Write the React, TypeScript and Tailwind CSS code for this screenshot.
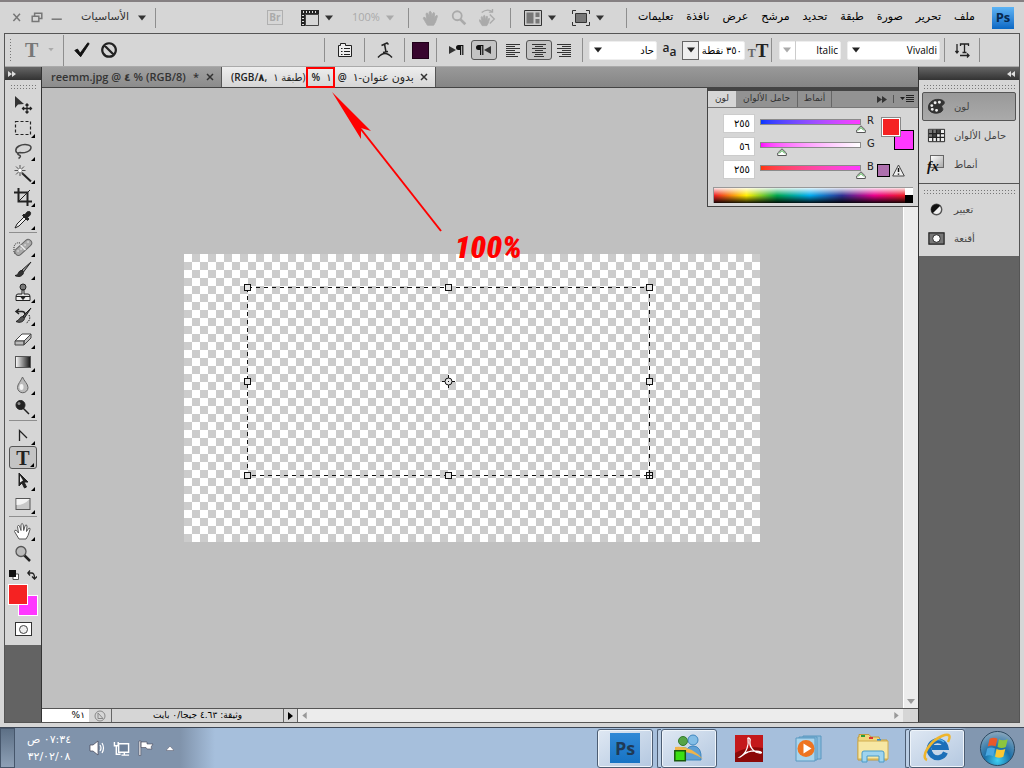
import { useState } from 'react';
import type { ReactNode } from 'react';
import clsx from 'clsx';

const MENUS = ['تعليمات', 'نافذة', 'عرض', 'مرشح', 'تحديد', 'طبقة', 'صورة', 'تحرير', 'ملف'];

type IconProps = { children: ReactNode; className?: string; size?: number };

function Icon({ children, className, size = 20 }: IconProps) {
  return (
    <svg viewBox="0 0 20 20" width={size} height={size} className={clsx('shrink-0', className)} fill="none" stroke="#222" aria-hidden="true">
      {children}
    </svg>
  );
}

function Caret({ className }: { className?: string }) {
  return (
    <svg viewBox="0 0 8 6" width="8" height="6" className={clsx('shrink-0', className)} fill="currentColor" aria-hidden="true">
      <path d="M0 .5h8L4 5.5z" />
    </svg>
  );
}

function Grip({ className }: { className?: string }) {
  return (
    <div
      className={clsx('bg-[radial-gradient(#777_40%,transparent_45%)] bg-[length:3px_3px]', className)}
    />
  );
}

function Rule({ className }: { className?: string }) {
  return <div className={clsx('w-px shrink-0 bg-[#8e8e8e]', className)} />;
}

// ---- toolbox ----

const handShape = 'M6 18 3 13 1.5 10.5Q1.5 8.500 3.500 9.500L5.500 12 4.500 5.500Q5 3.500 6.500 5L8 9.500V3.500Q9 1.500 10.200 3.500L10.700 9.500 12.200 4.500Q13.500 3 14 5L13.500 10.500 15.500 7.500Q17.500 6.500 17 8.500L15 14.500 13 18z';

const TOOLS: { name: string; icon: ReactNode; corner?: boolean; sep?: boolean }[] = [
  {
    name: 'Move',
    icon: (
      <>
        <path d="M2 1v12l3-3.500 6-.5z" fill="#333" stroke="none" />
        <path d="M14 9v9M9.500 13.500h9M12.500 10.500 14 9l1.500 1.500M12.500 16.500 14 18l1.500-1.500M11 12l-1.500 1.500L11 15M17 12l1.500 1.500L17 15" strokeWidth="1.300" />
      </>
    ),
  },
  { name: 'Marquee', corner: true, icon: <rect x="2.500" y="3.500" width="15" height="13" strokeDasharray="3 2" strokeWidth="1.200" /> },
  {
    name: 'Lasso',
    corner: true,
    icon: <path d="M6 12.500C2 12 1.500 7.500 6 5c5-2.500 12-1.500 12 1.500 0 4-7 6-11 5-2.500 0-3 2-1 2.500s2 2-.5 3.500" stroke="#444" strokeWidth="1.500" />,
  },
  {
    name: 'Magic wand',
    corner: true,
    icon: (
      <>
        <path d="m9 9 9 8.500" strokeWidth="2" />
        <path d="M7 1v11M1.500 6.500h11M3 2.500l8 8M11 2.500l-8 8" stroke="#555" />
        <circle cx="7" cy="6.500" r="1.800" fill="#fff" stroke="none" />
      </>
    ),
  },
  {
    name: 'Crop',
    corner: true,
    icon: (
      <>
        <path d="M5.500 1v13.500H19M1 5.500h13.500V19" strokeWidth="2" />
        <path d="M6 14 17 3" />
      </>
    ),
  },
  {
    name: 'Eyedropper',
    corner: true,
    icon: (
      <>
        <path d="m2 18 2-4 7-7 2 2-7 7z" fill="#eee" />
        <path d="m9.500 5.500 5 5 1.500-1.500-1.500-1.500C19 4.500 18 1 15.500 1.500 14 1.500 13 3 12 5l-1-1z" fill="#222" />
      </>
    ),
  },
  {
    name: 'Healing brush',
    corner: true,
    sep: true,
    icon: (
      <>
        <path d="M7 6q-5-1-6 4v6h5" strokeDasharray="1 1" />
        <rect x="0" y="7" width="20" height="7" rx="3.500" transform="rotate(-42 10 10)" fill="#aaa" stroke="#666" />
        <path d="m8 8.500 4 4M5 14h.1M8 12h.1M12 8h.1M15 5h.1" stroke="#eee" strokeWidth="1.500" strokeLinecap="round" />
      </>
    ),
  },
  {
    name: 'Brush',
    corner: true,
    icon: (
      <>
        <path d="m18 2-9 8 1.500 2z" fill="#999" />
        <path d="M9 10.500c-4-.5-3 5-7 5 3 2 8 1 8.500-3z" fill="#333" />
      </>
    ),
  },
  {
    name: 'Clone stamp',
    corner: true,
    icon: (
      <>
        <circle cx="10" cy="4" r="3" fill="#777" />
        <path d="M9 7v4H5q-2 0-2 2.500h14Q17 11 15 11h-4V7z" fill="#ddd" />
        <path d="M3 13.500h14v4H3z" fill="#eee" />
        <path d="M7.500 13.500h5L10 16.500z" fill="#222" />
      </>
    ),
  },
  {
    name: 'History brush',
    corner: true,
    icon: (
      <>
        <path d="m18 2-8 8 1.500 2zM10 10.500c-4 0-3 4-7 5 4 2 8 0 8.500-3z" fill="#555" />
        <path d="M3 5.500h6q3 0 3 3M6 3 3 5.500 6 8" strokeWidth="1.500" />
        <path d="M16 9c2 3 0 7-3 8" strokeDasharray="1.500 1" />
      </>
    ),
  },
  {
    name: 'Eraser',
    corner: true,
    icon: (
      <>
        <path d="m2 12 7-7h9l-7 7z" fill="#fff" stroke="#444" />
        <path d="M2 12h9v4H2zM11 12l7-7v4l-7 7z" fill="#bbb" stroke="#444" />
      </>
    ),
  },
  {
    name: 'Gradient',
    corner: true,
    icon: (
      <>
        <defs>
          <linearGradient id="toolGradient">
            <stop offset="0" stopColor="#fff" />
            <stop offset="1" stopColor="#111" />
          </linearGradient>
        </defs>
        <rect x="2.500" y="4.500" width="15" height="11" fill="url(#toolGradient)" stroke="#555" />
      </>
    ),
  },
  {
    name: 'Blur',
    corner: true,
    icon: (
      <>
        <path d="M9.500 2C8 6 4.500 9 4.500 12.500a5 5 0 0 0 10.500 0C15 9 11 6 9.500 2z" fill="#bbb" stroke="#666" />
        <ellipse cx="8.500" cy="12" rx="2" ry="3" fill="#f4f4f4" stroke="none" />
      </>
    ),
  },
  {
    name: 'Burn',
    corner: true,
    icon: (
      <>
        <path d="m10 10 6 6" strokeWidth="1.500" />
        <circle cx="7.500" cy="7" r="4.500" fill="#222" />
        <circle cx="6" cy="5.500" r="1.500" fill="#888" stroke="none" />
      </>
    ),
  },
  { name: 'Pen', corner: true, sep: true, icon: <path d="M6.500 16V5.500L14 13" strokeWidth="1.300" /> },
  { name: 'Type', corner: true, icon: null },
  {
    name: 'Path selection',
    corner: true,
    icon: (
      <>
        <path d="M6 2v13l3-3 2.500 5 2-1-2.500-5h4z" fill="#222" />
        <path d="M7 4.500v7l3-2z" fill="#eee" stroke="none" />
      </>
    ),
  },
  {
    name: 'Rectangle',
    corner: true,
    icon: (
      <>
        <rect x="3" y="4.500" width="14" height="11" fill="#c8c8c8" stroke="#555" />
        <path d="M3.500 11q8 0 13-6H3.500z" fill="#f4f4f4" stroke="none" />
      </>
    ),
  },
  { name: 'Hand', corner: true, sep: true, icon: <path d={handShape} fill="#fff" stroke="#555" /> },
  {
    name: 'Zoom',
    icon: (
      <>
        <path d="m11 11 6 6" strokeWidth="2.500" />
        <circle cx="8" cy="7.500" r="5" fill="#bbb" stroke="#555" strokeWidth="1.300" />
      </>
    ),
  },
];

function Toolbox() {
  const [active, setActive] = useState('Type');

  return (
    <aside className="flex w-[37px] shrink-0 flex-col border-r border-[#333] bg-[#636363]">
      <div className="flex h-[13px] items-center bg-linear-to-b from-[#666] to-[#333] pl-[3px] text-[#ddd]">
        <svg viewBox="0 0 8 6" width="8" height="6" fill="currentColor" aria-hidden="true">
          <path d="M0 0l4 3-4 3zM4 0l4 3-4 3z" />
        </svg>
      </div>
      <div className="flex flex-col items-center bg-[#d6d6d6]">
        <Grip className="my-1 h-[5px] w-[27px]" />
        {TOOLS.map((tool) => (
          <div key={tool.name} className={clsx('w-full px-1', tool.sep && 'pt-[4px]')}>
            {tool.sep && <div className="-mt-[3px] mb-[2px] h-px bg-[#8e8e8e]" />}
            <button
              aria-label={tool.name}
              onClick={() => setActive(tool.name)}
              className={clsx(
                'relative flex h-[23px] w-full items-center justify-center rounded-[3px]',
                active === tool.name && 'border border-[#555] bg-[#c4c4c4]',
              )}
            >
              {tool.icon ? (
                <Icon>{tool.icon}</Icon>
              ) : (
                <span className="font-['Liberation_Serif',serif] text-[20px] leading-none font-bold text-[#222]">T</span>
              )}
              {tool.corner && (
                <span className="absolute right-[2px] bottom-px h-[4px] w-[4px] bg-black [clip-path:polygon(100%_0,100%_100%,0_100%)]" />
              )}
            </button>
          </div>
        ))}
        <div className="flex h-[19px] w-full items-center justify-between pr-1 pl-1">
          <svg viewBox="0 0 10 10" width="10" height="10" aria-label="Default colours">
            <path d="M4 4h5.500v5.500H4z" fill="#fff" stroke="#555" />
            <path d="M0 0h7v7H0z" fill="#111" />
          </svg>
          <svg viewBox="0 0 10 10" width="10" height="10" fill="none" stroke="#222" strokeWidth="1.300" aria-label="Swap colours">
            <path d="M3 .5.800 3 3 5.500M1 3h3.500q3 0 3 5M5 6.500 7.500 9 10 6.500" />
          </svg>
        </div>
        <div className="grid h-[32px] w-[30px] grid-cols-3 grid-rows-3">
          <button aria-label="Background colour" className="col-span-2 col-start-2 row-span-2 row-start-2 border border-white bg-[#ff38ff]" />
          <button aria-label="Foreground colour" className="z-10 col-span-2 col-start-1 row-span-2 row-start-1 border border-white bg-[#f52222]" />
        </div>
        <button aria-label="Quick mask" className="mt-[6px] mb-[9px] flex h-[14px] w-[17px] items-center justify-center border border-[#333] bg-white">
          <span className="h-[9px] w-[9px] rounded-full border border-[#444] bg-[#eee]" />
        </button>
      </div>
    </aside>
  );
}

// ---- top bars ----

function MenuBar() {
  return (
    <header className="flex h-[33px] shrink-0 items-center border-t-2 border-[#858082] text-[11px] text-[#222]">
      <div className="flex w-[155px] items-center pl-[11px] text-[#666]">
        <button aria-label="Close" className="w-5">
          <Icon size={12}><path d="m4 3 11 12M15 3 4 15" stroke="#777" strokeWidth="2.500" /></Icon>
        </button>
        <button aria-label="Restore" className="w-5">
          <Icon size={12}><path d="M6 6V2h12v9h-5M2 7h11v9H2z" stroke="#777" strokeWidth="2.500" /></Icon>
        </button>
        <button aria-label="Minimise" className="w-5">
          <Icon size={12}><path d="M1 12h17" stroke="#777" strokeWidth="2.500" /></Icon>
        </button>
        <button dir="rtl" className="flex flex-1 items-center justify-between pr-[9px] pl-[10px] text-[#333]">
          <Caret />
          <span className="text-[11px] whitespace-nowrap">الأساسيات</span>
        </button>
      </div>
      <Rule className="h-5" />
      <div className="flex flex-1 justify-end">
        <div className="mr-[18px] flex h-[15px] w-4 items-center justify-center border border-[#b0b0b0] font-['Open_Sans',sans-serif] text-[10px] font-bold text-[#aaa]">
          Br
        </div>
      </div>
      <button aria-label="Extras" className="flex w-[51px] items-center gap-[6px] text-[#333]">
        <svg viewBox="0 0 18 16" width="18" height="16" aria-hidden="true">
          <path d="M0 0h18v4.500H4.500V16H0z" fill="#222" />
          <path d="M4.500 4.500h13v11h-13z" fill="#d6d6d6" stroke="#444" />
          <path d="M2 2h15M2 5v10" stroke="#ddd" strokeWidth="2" strokeDasharray="1 2" />
        </svg>
        <Caret />
      </button>
      <button className="flex w-[56px] items-center gap-[6px] text-[#aaa]">
        <span className="font-['Open_Sans',sans-serif] text-[11px]">100%</span>
        <Caret />
      </button>
      <Rule className="h-5" />
      <div className="flex w-[101px] items-center justify-around px-2">
        <Icon size={18}><path d={handShape} fill="#aaa" stroke="#aaa" /></Icon>
        <Icon size={18}>
          <path d="m11 11 6 6" stroke="#aaa" strokeWidth="3" />
          <circle cx="8" cy="7.500" r="5" stroke="#aaa" strokeWidth="2" />
        </Icon>
        <Icon size={18}>
          <path d={handShape} fill="#aaa" stroke="#aaa" transform="translate(-1 5) scale(.75)" />
          <path d="m12 6 5 5-5 5M3 4q6-5 12-1M15 0v3.500h-4" stroke="#aaa" strokeWidth="1.500" />
        </Icon>
      </div>
      <Rule className="h-5" />
      <div className="flex w-[115px] items-center gap-[6px] pl-[13px] text-[#333]">
        <svg viewBox="0 0 18 16" width="18" height="16" fill="#777" stroke="#333" aria-label="Arrange documents">
          <path d="M.5.5h17v15H.5z" fill="#ccc" />
          <path d="M2.500 2.500h7v11h-7zM11.500 2.500h4v4.500h-4zM11.500 9h4v4.500h-4z" stroke="none" />
        </svg>
        <Caret />
        <svg viewBox="0 0 18 16" width="18" height="16" fill="none" stroke="#333" aria-label="Screen mode" className="ml-[10px]">
          <path d="M.5 4V.5H4M14 .5h3.500V4M17.500 12v3.500H14M4 15.500H.5V12" />
          <path d="M3.500 3.500h11v9h-11z" fill="#777" />
        </svg>
        <Caret />
      </div>
      <Rule className="h-5" />
      <nav className="flex w-[348px] items-center justify-between pl-[11px]">
        {MENUS.map((m) => (
          <button key={m} dir="rtl" className="text-[11px] whitespace-nowrap text-black">{m}</button>
        ))}
      </nav>
      <div className="mr-[10px] ml-[17px] flex h-[22px] w-[22px] shrink-0 items-center justify-center bg-linear-to-b from-[#5db4f5] to-[#0868c4] font-['Open_Sans',sans-serif] text-[13px] font-bold text-[#06284f]">
        Ps
      </div>
    </header>
  );
}

function DropBox({ label, value, className, arrow }: { label: string; value: string; className: string; arrow?: string }) {
  return (
    <div className={clsx('relative shrink-0', className)}>
      <select aria-label={label} dir="rtl" className="block h-[19px] w-full appearance-none rounded-[2px] border border-[#eee] bg-white pr-[2px] font-['Open_Sans','DejaVu_Sans',sans-serif] text-[10px] text-black">
        <option>{value}</option>
      </select>
      <span className={clsx('pointer-events-none absolute top-0 left-0 flex h-[19px] w-[17px] items-center justify-center', arrow)}>
        <Caret />
      </span>
    </div>
  );
}

function AlignIcon({ d }: { d: string }) {
  return (
    <svg viewBox="0 0 14 14" width="14" height="14" stroke="#333" aria-hidden="true">
      <path d={d} />
    </svg>
  );
}

function ParagraphIcon({ flip }: { flip?: boolean }) {
  return (
    <svg viewBox="0 0 15 12" width="15" height="12" aria-hidden="true">
      <path d={flip ? 'M15 2v8L8 6z' : 'M0 2v8l7-4z'} fill="#333" />
      <path
        d={flip ? 'M4 1H2.500a2.500 2.500 0 0 0 0 5H4v5h1.200V2h1v9h1.200V1z' : 'M11 1h-1.500a2.500 2.500 0 0 0 0 5H11v5h1.200V2h1v9h1.200V1z'}
        fill="#111"
      />
    </svg>
  );
}

function OptionsBar() {
  return (
    <div className="flex h-[33px] shrink-0 items-center border-b border-[#aaa] bg-[#d6d6d6] text-[#222]">
      <Grip className="ml-1 h-6 w-[3px]" />
      <div className="flex w-[51px] items-center justify-around pr-1 pl-2 text-[#aaa]">
        <span className="font-['Liberation_Serif',serif] text-[20px] font-bold text-[#777]">T</span>
        <svg viewBox="0 0 8 6" width="6" height="4" fill="currentColor"><path d="M0 0h8L4 5z" /></svg>
      </div>
      <Rule className="h-[31px]" />
      <div className="flex flex-1 items-center gap-[9px] pl-[9px]">
        <button aria-label="Commit">
          <Icon size={18}><path d="m2 10.500 3-1.500 3 4.500L16.500 2l1.500 1L8.500 17.500z" fill="#111" stroke="#111" /></Icon>
        </button>
        <button aria-label="Cancel">
          <Icon size={18}><path d="M10 2.500a7.500 7.500 0 1 0 .1 0zM5 5l10 10" stroke="#222" strokeWidth="2.500" /></Icon>
        </button>
      </div>
      <Rule className="h-6" />
      <button aria-label="Character panel" className="flex w-[39px] justify-center">
        <svg viewBox="0 0 16 16" width="16" height="16" fill="none" stroke="#222">
          <path d="M1.500 3.500h2v-2h5v2h6v11h-13z" fill="#eee" />
          <path d="M4 6.500h1.500M4 9.500h1.500M4 12.500h1.500M7 6.500h6M7 9.500h6M7 12.500h6" />
        </svg>
      </button>
      <Rule className="h-6" />
      <button aria-label="Warp text" className="flex w-[39px] justify-center">
        <svg viewBox="0 0 16 18" width="16" height="18" fill="none" stroke="#222" strokeWidth="1.500">
          <path d="M4.500 4.500 10 2l1.500 1.500M7.500 3l1.500 8M6 11.500l5-1M1 16.500q7-8 14 0" />
        </svg>
      </button>
      <Rule className="h-6" />
      <button aria-label="Text colour" className="mx-[7px] h-[17px] w-[17px] shrink-0 border border-[#1f0018] bg-[#38052e]" />
      <Rule className="h-6" />
      <div className="flex w-[145px] shrink-0 items-center justify-between pr-[11px] pl-[12px]">
        <button aria-label="Left to right" className="w-5"><ParagraphIcon /></button>
        <button aria-label="Right to left" className="-ml-1 flex h-5 w-[26px] items-center justify-center rounded-[3px] border border-[#555] bg-[#c4c4c4]">
          <ParagraphIcon flip />
        </button>
        <button aria-label="Align left" className="pl-1"><AlignIcon d="M0 1.500h14M0 3.500h9M0 5.500h14M0 7.500h9M0 9.500h14M0 11.500h9M0 13.500h12" /></button>
        <button aria-label="Centre" className="flex h-5 w-[26px] items-center justify-center rounded-[3px] border border-[#555] bg-[#c4c4c4]">
          <AlignIcon d="M0 1.500h14M3 3.500h8M0 5.500h14M3 7.500h8M0 9.500h14M3 11.500h8M2 13.500h10" />
        </button>
        <button aria-label="Align right"><AlignIcon d="M0 1.500h14M5 3.500h9M0 5.500h14M5 7.500h9M0 9.500h14M5 11.500h9M2 13.500h12" /></button>
      </div>
      <Rule className="h-6" />
      <DropBox label="Anti-aliasing" value="حاد" className="ml-[6px] w-[68px]" />
      <span className="flex w-[25px] items-end justify-center font-['Open_Sans',sans-serif] text-[12px] leading-none font-semibold">
        <span className="pb-1">a</span>
        <span>a</span>
      </span>
      <DropBox label="Font size" value="٣٥٠ نقطة" className="w-[63px]" arrow="border border-[#666] bg-[#eee]" />
      <span className="flex w-[26px] items-baseline justify-center font-['Liberation_Serif',serif] leading-none font-bold">
        <span className="text-[12px] text-[#666]">T</span>
        <span className="text-[19px]">T</span>
      </span>
      <Rule className="h-6" />
      <DropBox label="Font style" value="Italic" className="ml-[7px] w-[62px]" arrow="border-r border-[#ccc] text-[#aaa]" />
      <DropBox label="Font family" value="Vivaldi" className="ml-[6px] w-[93px]" />
      <Rule className="ml-1 h-6" />
      <button aria-label="Text orientation" className="flex w-[34px] justify-center">
        <svg viewBox="0 0 15 16" width="15" height="16" fill="none" stroke="#222" strokeWidth="1.300">
          <path d="M2 2v9M.5 9 2 11 3.500 9M5.500 4V2h8v2M9.500 2v8.500M7.500 10.500h4M5 13.500h9M12 11.500l2 2-2 2" />
        </svg>
      </button>
      <Rule className="mr-[39px] h-6" />
    </div>
  );
}

// ---- document area ----

function CloseMark() {
  return (
    <svg viewBox="0 0 8 8" width="8" height="8" stroke="#333" strokeWidth="1.500" aria-hidden="true">
      <path d="m1 1 6 6M7 1 1 7" />
    </svg>
  );
}

function DocumentTabs() {
  return (
    <div className="flex h-[21px] shrink-0 border-b border-[#444] bg-linear-to-b from-[#999] to-[#858585] font-['Open_Sans','DejaVu_Sans',sans-serif] text-[11px] font-semibold whitespace-nowrap">
      <button className="flex w-[180px] items-center justify-between border-r border-[#555] bg-linear-to-b from-[#a0a0a0] to-[#8c8c8c] pr-[7px] pl-[9px] text-[#333]">
        <span dir="ltr">reemm.jpg @ ٤ % (RGB/8)</span>
        <span>*</span>
        <CloseMark />
      </button>
      <button className="flex w-[214px] items-center justify-between border-r border-[#555] bg-linear-to-b from-[#eee] to-[#d6d6d6] pr-[7px] pl-[9px] text-[10px] text-[#222]">
        <span dir="ltr">(RGB/٨,</span>
        <span dir="rtl" className="font-normal">(طبقة ١</span>
        <span>%</span>
        <span className="font-normal">١</span>
        <span>@</span>
        <span dir="rtl" className="text-[11px] font-normal">بدون عنوان-١</span>
        <CloseMark />
      </button>
    </div>
  );
}

const HANDLES = [
  [63, 33], [264, 33], [465, 33],
  [63, 127], [465, 127],
  [63, 221], [264, 221], [465, 221],
];

function TransformBox() {
  return (
    <svg viewBox="0 0 576 288" width="576" height="288" fill="none" stroke="#111" shapeRendering="crispEdges" aria-hidden="true">
      <rect x="63.500" y="33.500" width="402" height="188" strokeDasharray="4 4" />
      {HANDLES.map(([x, y]) => (
        <rect key={`${x}-${y}`} x={x - 2.5} y={y - 2.5} width="6" height="6" fill="#e6e6e6" />
      ))}
      <path d="M465.500 218v7M462 221.500h7" />
      <g shapeRendering="auto">
        <circle cx="264.500" cy="127.500" r="3.500" fill="#e6e6e6" />
        <path d="M264.500 121v3M264.500 131v3M258 127.500h3M268 127.500h3M264 127.500h1" />
      </g>
    </svg>
  );
}

function Annotation() {
  return (
    <div className="pointer-events-none absolute top-0 left-[258px] z-20 h-[200px] w-[230px]">
      <svg viewBox="0 0 230 200" width="230" height="200" fill="none" stroke="#f00" aria-hidden="true">
        <rect x="7" y="1" width="27" height="19" strokeWidth="2" />
        <path d="M60 61 141 164" strokeWidth="2" />
        <path d="M32 25 71 64l-10-3 0 11z" fill="#f00" stroke="none" />
      </svg>
      <span className="absolute right-2 bottom-1 font-['Roboto_Condensed','Roboto',sans-serif] text-[32px] leading-none font-black text-[#f00] italic">
        100%
      </span>
    </div>
  );
}

type Channel = { id: string; value: string; amount: number; bar: string };

const CHANNELS: Channel[] = [
  { id: 'R', value: '٢٥٥', amount: 255, bar: 'from-[#0038ff] to-[#ff38ff]' },
  { id: 'G', value: '٥٦', amount: 56, bar: 'from-[#ff00ff] to-[#ffffff]' },
  { id: 'B', value: '٢٥٥', amount: 255, bar: 'from-[#ff3800] to-[#ff38ff]' },
];

function ChannelRow({ channel }: { channel: Channel }) {
  const [amount, setAmount] = useState(channel.amount);

  return (
    <div className="flex h-[23px] items-start">
      <input
        dir="rtl"
        aria-label={`${channel.id} value`}
        defaultValue={channel.value}
        className="h-[19px] w-8 border border-[#ccc] bg-white pr-1 text-[10px] text-black"
      />
      <div className="relative mt-[5px] ml-[5px] w-[101px]">
        <div className={clsx('h-[6px] border border-[#8a8a8a] bg-linear-to-r', channel.bar)} />
        <svg
          viewBox="0 0 10 8"
          width="10"
          height="8"
          className="absolute top-[6px] -ml-[5px]"
          style={{ left: `${(amount / 255) * 100}%` }}
          aria-hidden="true"
        >
          <path d="M5 .8 9.300 5v2.500H.7V5z" fill="#fff" stroke="#555" />
          <path d="M2 5.500 5 2.500 8 5.500" stroke="#2a9a2a" fill="none" />
        </svg>
        <input
          id={`ch-${channel.id}`}
          type="range"
          min={0}
          max={255}
          value={amount}
          onChange={(e) => setAmount(Number(e.target.value))}
          className="absolute top-0 left-0 h-[14px] w-full opacity-0"
        />
      </div>
      <label htmlFor={`ch-${channel.id}`} className="ml-[6px] text-[10px] leading-[14px] text-[#222]">{channel.id}</label>
    </div>
  );
}

function ColorPanel() {
  return (
    <section className="absolute top-0 right-0 z-10 w-[211px] border-t-[3px] border-b border-l border-[#444] bg-[#d6d6d6]">
      <div className="flex h-[17px] items-stretch border-b border-[#777] bg-[#929292] text-[9px] text-[#333]">
        <button className="w-[28px] bg-[#d6d6d6]">لون</button>
        <button className="w-[62px] border-r border-[#666] whitespace-nowrap">حامل الألوان</button>
        <button className="w-[34px] border-r border-[#666]">أنماط</button>
        <div className="flex flex-1 items-center justify-end gap-[6px] pr-1">
          <svg viewBox="0 0 10 7" width="10" height="7" fill="#333"><path d="M0 0l5 3.500L0 7zM5 0l5 3.500L5 7z" /></svg>
          <span className="h-2 w-px bg-[#555]" />
          <svg viewBox="0 0 14 8" width="14" height="8" fill="#222"><path d="M0 2h5L2.500 5zM6 0h8v1H6zM6 2h8v1H6zM6 4h8v1H6zM6 6h8v1H6z" /></svg>
        </div>
      </div>
      <div className="flex pt-[6px] pr-1 pl-[15px]">
        <div>
          {CHANNELS.map((c) => <ChannelRow key={c.id} channel={c} />)}
        </div>
        <div className="flex flex-1 flex-col items-end">
          <div className="mt-[3px] grid h-[33px] w-[33px] grid-cols-5 grid-rows-5">
            <button aria-label="Background" className="col-span-3 col-start-3 row-span-3 row-start-3 border border-black bg-[#ff38ff]" />
            <button aria-label="Foreground" className="z-10 col-span-3 col-start-1 row-span-3 row-start-1 border border-[#888] bg-[#f52222] outline-1 -outline-offset-2 outline-white" />
          </div>
          <div className="mt-[14px] flex items-center gap-[2px] pr-[9px]">
            <button aria-label="Web safe colour" className="h-[13px] w-[13px] border border-black bg-[#ae70ae]" />
            <svg viewBox="0 0 13 13" width="13" height="13" fill="#eee" stroke="#444" aria-label="Out of gamut">
              <path d="M6.500 1 12.300 12H.7z" strokeLinejoin="round" />
              <path d="M6.500 4v4M6.500 9.500v1.300" stroke="#111" strokeWidth="1.500" />
            </svg>
          </div>
        </div>
      </div>
      <div className="mt-1 mr-[5px] mb-[3px] ml-[5px] flex h-4 border-t border-l border-[#999]">
        <div className="flex-1 bg-[linear-gradient(to_bottom,#ffffffe0,transparent_50%,#000000e8),linear-gradient(to_right,#ed1c24,#ffee00_17%,#00a64f_33%,#00adef_50%,#2e3192_67%,#ec008c_84%,#ed1c24)]" />
        <div className="w-2 bg-linear-to-b from-white from-50% to-black to-50%" />
      </div>
    </section>
  );
}

function StatusBar() {
  return (
    <div className="flex h-[14px] shrink-0 items-stretch border-t border-[#555] bg-[#d6d6d6] text-[9px] text-black">
      <input aria-label="Zoom" dir="ltr" defaultValue="%١" className="w-[47px] bg-white pr-1 text-right" />
      <div className="flex w-[23px] items-center justify-center border-r border-[#666]">
        <svg viewBox="0 0 12 12" width="12" height="12" fill="none" stroke="#888">
          <circle cx="6" cy="6" r="5" />
          <path d="M4 8.500V3l5 5.500z" />
        </svg>
      </div>
      <div dir="rtl" className="flex w-[171px] items-center justify-center leading-none whitespace-nowrap">وثيقة: ٤.٦٣ جيجا/٠ بايت</div>
      <button aria-label="Status menu" className="flex w-[15px] items-center justify-center border-x border-[#666]">
        <svg viewBox="0 0 5 8" width="5" height="8"><path d="M0 0l5 4-5 4z" /></svg>
      </button>
      <div className="flex flex-1 items-center justify-between bg-[#ececec] px-1">
        <svg viewBox="0 0 5 8" width="5" height="7" fill="#999"><path d="M5 0 0 4l5 4z" /></svg>
        <svg viewBox="0 0 5 8" width="5" height="7" fill="#999"><path d="M0 0l5 4-5 4z" /></svg>
      </div>
      <div className="w-[15px]" />
    </div>
  );
}

function DocumentArea() {
  return (
    <section className="relative flex min-w-0 flex-1 flex-col">
      <DocumentTabs />
      <div className="relative flex min-h-0 flex-1">
        <div className="flex flex-1 items-center justify-center overflow-hidden bg-[#c0c0c0] pr-px">
          <div className="shrink-0 bg-[conic-gradient(#ccc_25%,#fff_0_50%,#ccc_0_75%,#fff_0)] bg-[length:16px_16px]">
            <TransformBox />
          </div>
        </div>
        <div className="flex w-[15px] items-end justify-center border-l border-white bg-[#ececec] pb-1">
          <svg viewBox="0 0 8 5" width="8" height="5" fill="#999"><path d="M0 0h8L4 5z" /></svg>
        </div>
        <ColorPanel />
      </div>
      <StatusBar />
      <Annotation />
    </section>
  );
}

// ---- right dock ----

function DockItem({ label, icon, active }: { label: string; icon: ReactNode; active?: boolean }) {
  return (
    <button
      className={clsx(
        'mx-[3px] flex h-[29px] items-center gap-[8px] rounded-[2px] border pl-[4px] text-[10px] text-[#444]',
        active ? 'border-[#555] bg-linear-to-b from-[#999] to-[#aaa]' : 'border-transparent',
      )}
    >
      {icon}
      <span dir="rtl" className="whitespace-nowrap">{label}</span>
    </button>
  );
}

function Dock() {
  return (
    <aside className="flex w-[101px] shrink-0 flex-col border-l border-[#333] bg-[#636363]">
      <div className="flex h-[13px] items-center justify-end bg-linear-to-b from-[#666] to-[#333] pr-1 text-[#ddd]">
        <svg viewBox="0 0 8 6" width="8" height="6" fill="currentColor"><path d="M4 0 0 3l4 3zM8 0 4 3l4 3z" /></svg>
      </div>
      <div className="flex flex-col bg-[#d6d6d6] pb-[3px]">
        <Grip className="mx-1 mt-1 mb-[3px] h-[5px]" />
        <DockItem
          active
          label="لون"
          icon={
            <Icon size={19}>
              <path d="M1.500 12C1 5 8 1 15 3c4 1 4 4 1.500 5.500-2 1-1 2 0 3.500 1 3-3 5-7 5s-7.500-2-8-5z" fill="#333" stroke="#333" />
              <path d="M5 9h.1M8.500 6h.1M13 5.500h.1M5.500 13h.1M10 14h.1" stroke="#eee" strokeWidth="3" strokeLinecap="round" />
            </Icon>
          }
        />
        <DockItem
          label="حامل الألوان"
          icon={
            <Icon size={19}>
              <path d="M1.500 3.500h17v13h-17z" fill="#eee" />
              <path d="M2 4h4v4H2zM2 8h4v4H2zM6 4h4v4H6z" fill="#777" stroke="none" />
              <path d="M10 4h4v4h-4zM6 8h4v4H6z" fill="#444" stroke="none" />
              <path d="M2 8h16M2 12h16M6 4v12M10 4v12M14 4v12" strokeWidth="1.300" />
            </Icon>
          }
        />
        <DockItem
          label="أنماط"
          icon={
            <span className="relative h-[19px] w-[19px]">
              <span className="ml-[3px] block h-[13px] w-[14px] border border-[#666] bg-linear-to-br from-white to-[#aaa]" />
              <span className="absolute bottom-0 left-0 font-['Liberation_Serif',serif] text-[14px] leading-none font-bold text-[#111] italic">fx</span>
            </span>
          }
        />
        <div className="mt-[4px] mb-[5px] h-px bg-[#555]" />
        <Grip className="mx-1 mb-px h-[5px]" />
        <DockItem
          label="تعيير"
          icon={
            <Icon size={19}>
              <circle cx="10" cy="10" r="5.500" fill="#eee" stroke="#555" strokeWidth="1.500" />
              <path d="M6 14A5.500 5.500 0 0 1 14 6z" fill="#111" stroke="none" />
            </Icon>
          }
        />
        <DockItem
          label="أقنعة"
          icon={
            <Icon size={19}>
              <path d="M2 4h16v12H2z" fill="#777" strokeWidth="1.300" />
              <circle cx="10" cy="10" r="4" fill="#fff" />
            </Icon>
          }
        />
      </div>
    </aside>
  );
}

// ---- taskbar ----

function TaskButton({ label, children, stacked }: { label: string; children: ReactNode; stacked?: boolean }) {
  return (
    <div className="flex">
      {stacked && <div className="h-[39px] w-1 rounded-l-[2px] border-y border-l border-[#4c5d73] bg-[#b9cde4]" />}
      <button
        aria-label={label}
        className="flex h-[39px] w-[56px] items-center justify-center rounded-[3px] border border-[#4c5d73] bg-linear-to-br from-[#dfe8f3] to-[#b4c8e0] shadow-[inset_0_0_0_1px_#eef4fa]"
      >
        {children}
      </button>
    </div>
  );
}

function Taskbar() {
  return (
    <footer className="flex h-[41px] shrink-0 items-center border-t border-[#3d4756] bg-[linear-gradient(to_right,#8093ab_180px,#a6bfdc_215px,#a6bfdc_960px,#8297b0_966px)]">
      <button aria-label="Show desktop" className="h-full w-[15px] border border-[#46566b] bg-linear-to-b from-[#5d7086] to-[#8ea0b6]" />
      <div className="ml-[8px] flex w-[52px] flex-col items-center text-[11px] leading-[17px] whitespace-nowrap text-white">
        <span dir="rtl">٠٧:٣٤ ص</span>
        <span dir="ltr">٣٢/٠٢/٠٨</span>
      </div>
      <div className="ml-[14px] flex items-center gap-2">
        <svg viewBox="0 0 16 16" width="16" height="16" fill="#fff" stroke="#445" strokeWidth=".7" aria-label="Volume">
          <path d="M1 5h3l5-4v14l-5-4H1z" />
          <path d="M11 5q2 3 0 6M13 3q3 5 0 10" fill="none" stroke="#fff" strokeWidth="1.200" />
        </svg>
        <svg viewBox="0 0 18 18" width="17" height="17" fill="none" stroke="#fff" strokeWidth="1.500" aria-label="Network">
          <path d="M6 4h10.500v9H6zM9 16h8M12 13v3" fill="#6d8099" />
          <path d="M1.500 2v4h4V2M3.500 6v9H8" />
        </svg>
        <svg viewBox="0 0 16 16" width="16" height="16" fill="#fff" stroke="#445" strokeWidth=".6" aria-label="Action centre">
          <path d="M1 1h1.800v14.500H1zM3 2h6v2h6l-2 3 1 2H9l-1-1.500H3z" />
        </svg>
        <svg viewBox="0 0 8 5" width="8" height="5" fill="#fff" stroke="#556" strokeWidth=".5" className="ml-1" aria-label="Show hidden icons">
          <path d="M4 0l4 4.500H0z" />
        </svg>
      </div>
      <div className="flex-1" />
      <TaskButton label="Photoshop">
        <span className="flex h-[30px] w-[30px] items-center justify-center bg-linear-to-b from-[#3089d6] to-[#1673c4] font-['Open_Sans',sans-serif] text-[18px] font-bold text-[#1f3a56]">
          Ps
        </span>
      </TaskButton>
      <div className="ml-1">
        <TaskButton label="Messenger" stacked>
          <svg viewBox="0 0 30 28" width="30" height="28">
            <circle cx="9" cy="7" r="4.500" fill="#55a446" stroke="#327a2c" />
            <path d="M2 22q0-9 7-9t8 8z" fill="#62b34e" />
            <circle cx="19" cy="6" r="5" fill="#83bde6" stroke="#3f86bf" />
            <path d="M11 26q-1-14 8-14t8 14z" fill="#5f9fd4" stroke="#3f86bf" />
            <path d="M1 13q15-2 28 12-13-9-28-7z" fill="#f0b44a" />
            <path d="M.8 16.800h10.500v10H.8z" fill="#3be012" stroke="#185a0a" strokeWidth="1.500" />
          </svg>
        </TaskButton>
      </div>
      <div className="flex w-[188px] items-center justify-between pr-[16px] pl-[18px]">
        <button aria-label="Adobe Reader">
          <svg viewBox="0 0 28 27" width="28" height="27">
            <path d="M0 0h28v27H0z" fill="#8c0909" />
            <path d="M0 0h28v13Q14 10 0 18z" fill="#c4191b" />
            <path d="M5 22c7-4 9-13 8-18-1-2 3-1 2 2-1 7 5 12 10 12s-4-4-12-1c-4 1-7 5-8 5z" fill="none" stroke="#fff" strokeWidth="1.300" />
          </svg>
        </button>
        <button aria-label="Media Player">
          <svg viewBox="0 0 30 27" width="30" height="27">
            <path d="M8 1h18v23H8z" fill="#8cbcdc" stroke="#5a98c0" />
            <path d="M4 2h18v23H4z" fill="#8fc5e5" stroke="#5a98c0" />
            <path d="M1 3h19v23H1z" fill="#a9d4ec" stroke="#5a98c0" />
            <circle cx="11" cy="13.500" r="8.500" fill="#ee7420" />
            <path d="M8.500 8.500v10l8-5z" fill="#fff" />
          </svg>
        </button>
        <button aria-label="Explorer">
          <svg viewBox="0 0 32 30" width="32" height="30">
            <path d="M2 4V1.500h10l2 2.500h8l1 3h7v20H1V4z" fill="#efd67d" stroke="#c29a3a" />
            <path d="M4 2h4v2H4z" fill="#2c9e3a" />
            <path d="M12 4h4v2h-4z" fill="#d33" />
            <path d="M20 6h4v2h-4z" fill="#2a8ad8" />
            <path d="M1 8h30v18H1z" fill="#f7e7a3" stroke="#d1ad50" />
            <path d="M5 29v-9q0-2 2-2h18q2 0 2 2v9h-5v-6H10v6z" fill="#9ed4ef" stroke="#4b9bc7" />
          </svg>
        </button>
      </div>
      <TaskButton label="Internet Explorer" stacked>
        <svg viewBox="0 0 30 30" width="30" height="30" fill="none">
          <path d="M23.500 19.500A8.500 8.500 0 1 1 24 14.500H10" stroke="#1c6fb8" strokeWidth="5" />
          <path d="M22 9A8.500 8.500 0 0 0 8 12" stroke="#5cb4ea" strokeWidth="1.500" />
          <path d="M5 27C-2 24 8 8 20 3c8-3 9 0 6 6" stroke="#eeb52c" strokeWidth="2.500" />
        </svg>
      </TaskButton>
      <button aria-label="Start" className="mr-[8px] ml-[14px]">
        <svg viewBox="0 0 38 38" width="37" height="37">
          <defs>
            <radialGradient id="orb" cx=".5" cy=".85" r=".85">
              <stop offset="0" stopColor="#3fd0f2" />
              <stop offset=".45" stopColor="#1b6fa8" />
              <stop offset="1" stopColor="#8fa9bd" />
            </radialGradient>
          </defs>
          <circle cx="19" cy="19" r="17.500" fill="url(#orb)" stroke="#29465f" />
          <path d="M11 9q4-2 8 0l-2 8q-4-2-8 0z" fill="#e8592b" />
          <path d="M20.500 9.500q4 2 9 0l-2 8q-4 2-8.500 0z" fill="#8cc63e" />
          <path d="M8.500 19q4-2 8 0l-2 8q-4-2-8 0z" fill="#4aa7e0" />
          <path d="M18 19.500q4 2 9 0l-2 8q-4 2-8.500 0z" fill="#fbc832" />
        </svg>
      </button>
    </footer>
  );
}

export default function App() {
  return (
    <div className="flex h-screen min-h-[700px] flex-col overflow-hidden bg-[#d6d6d6] font-['DejaVu_Sans',sans-serif]">
      <MenuBar />
      <main className="mx-1 mb-1 flex min-h-0 flex-1 flex-col border border-[#555]">
        <OptionsBar />
        <div className="flex min-h-0 flex-1">
          <Toolbox />
          <DocumentArea />
          <Dock />
        </div>
      </main>
      <Taskbar />
    </div>
  );
}
